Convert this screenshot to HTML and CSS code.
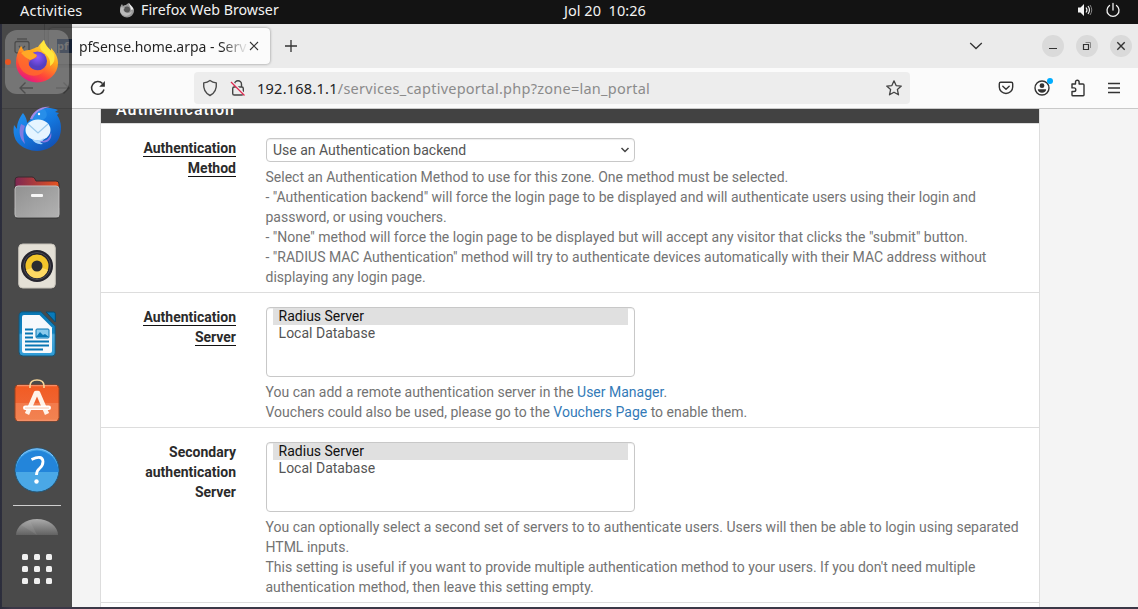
FILE: index.html
```
<!DOCTYPE html>
<html lang="en">
<head>
<meta charset="utf-8">
<title>pfSense.home.arpa - Services</title>
<link rel="stylesheet" href="styles.css">
</head>
<body>
<div class="desktop">
  <header class="topbar">
    <span class="activities">Activities</span>
    <svg class="app-icon" width="16" height="16" viewBox="0 0 16 16"><path d="M1 7C1 5 2 3 3 2l1 2c1-1 2-1 3-1C8 2 9 1 10 1c0 2 5 3 5 8a7 6.500 0 0 1-14 0z" fill="#999"/><path d="M10 1c0 3 2 4 2 7 2-1 3 0 3 1-1-4-3-5-5-8z" fill="#eee"/><circle cx="8" cy="7.500" r="3" fill="#555"/><path d="M2 5l4 1-2 1c1 5 7 5 9 2-1 6-10 7-12 0z" fill="#bbb"/></svg>
    <span class="app-name">Firefox Web Browser</span>
    <span class="clock">Jol 20&nbsp; 10:26</span>
    <span class="status">
      <svg width="16" height="16" viewBox="0 0 16 16" fill="none" stroke="#f2f2f2"><path d="M1 5.500h2.500L7 2v12l-3.500-3.500H1z" fill="#f2f2f2" stroke="none"/><path d="M9 5.500q2 2.500 0 5M11 4q3 4 0 8" stroke-width="1.200"/><path d="M13 3q3.500 5 0 10" stroke="#888"/></svg>
      <svg width="16" height="16" viewBox="0 0 16 16" fill="none" stroke="#f2f2f2" stroke-width="1.300" stroke-linecap="round"><path d="M4.500 3.500a6 6 0 1 0 7 0M8 1.500V8"/></svg>
    </span>
  </header>

  <main class="window">
    <div class="tabbar">
      <svg class="tab-view" width="16" height="16" viewBox="0 0 16 16" fill="none" stroke="#222" stroke-width="1.300"><path d="M3 1h10"/><rect x="1" y="3.500" width="14" height="11.500" rx="2"/><path d="M5 8l3 3 3-3"/></svg>
      <span class="tab-divider"></span>
      <div class="tab">
        <span class="favicon">pf</span>
        <span class="tab-title">pfSense.home.arpa - Serv</span>
        <svg width="10" height="10" viewBox="0 0 10 10" fill="none" stroke="#333" stroke-width="1.100"><path d="M1 1l8 8M9 1l-8 8"/></svg>
      </div>
      <svg class="new-tab" width="14" height="14" viewBox="0 0 14 14" fill="none" stroke="#333" stroke-width="1.300"><path d="M7 1v12M1 7h12"/></svg>
      <svg class="tab-list" width="14" height="10" viewBox="0 0 14 10" fill="none" stroke="#333" stroke-width="1.300"><path d="M1.200 2L7 7.500 12.800 2"/></svg>
      <div class="controls">
        <span class="control"><svg width="10" height="10" viewBox="0 0 10 10" fill="none" stroke="#333"><path d="M1 7.500h8"/></svg></span>
        <span class="control"><svg width="10" height="10" viewBox="0 0 10 10" fill="none" stroke="#333"><path d="M1.500 3.500h5v5h-5z" stroke-width="1.200"/><path d="M3.500 1.500h5v5.500" stroke="#888"/></svg></span>
        <span class="control"><svg width="10" height="10" viewBox="0 0 10 10" fill="none" stroke="#333" stroke-width="1.400"><path d="M1.300 1.300l7.400 7.400M8.700 1.300L1.300 8.700"/></svg></span>
      </div>
    </div>

    <div class="toolbar">
      <svg class="back" width="16" height="16" viewBox="0 0 16 16" fill="none" stroke="#333" stroke-width="1.400"><path d="M15 8H2M7.500 2.500L2 8l5.500 5.500"/></svg>
      <svg class="forward" width="16" height="16" viewBox="0 0 16 16" fill="none" stroke="#aaa" stroke-width="1.400"><path d="M1 8h13M8.500 2.500L14 8l-5.500 5.500"/></svg>
      <svg class="reload" width="16" height="16" viewBox="0 0 16 16" fill="none" stroke="#333" stroke-width="1.500"><path d="M14 9.500A6.300 6.300 0 1 1 12.500 3.600"/><path d="M14.900 1v5.700H9.200z" fill="#333" stroke="none"/></svg>
      <div class="urlbar">
        <svg width="16" height="18" viewBox="0 0 16 18" fill="none" stroke="#4a4a4a" stroke-width="1.400"><path d="M8 1.500C10 3 12 3.600 14.300 3.900c.5 5.500-1.500 10.300-6.300 12.600C3.200 14.200 1.200 9.400 1.700 3.900 4 3.600 6 3 8 1.500z" stroke-linejoin="round"/></svg>
        <svg class="lock" width="16" height="18" viewBox="0 0 16 18" fill="none"><path d="M4.500 8V5.200a3.500 3.500 0 0 1 7 0V8" stroke="#444" stroke-width="1.400"/><rect x="2.700" y="8" width="10.600" height="8" rx="1.600" stroke="#444" stroke-width="1.400"/><path d="M1.500 2.500l14 14" stroke="#eee" stroke-width="2.400"/><path d="M1 3l13.500 13.500" stroke="#e22850" stroke-width="1.300"/></svg>
        <span class="url"><span class="host">192.168.1.1</span><span class="path">/services_captiveportal.php?zone=lan_portal</span></span>
        <svg class="star" width="18" height="18" viewBox="0 0 18 18" fill="none" stroke="#444" stroke-width="1.300" stroke-linejoin="round"><path d="M9 1.800l2.100 4.800 5.200.5-3.900 3.500 1.100 5.200L9 13.200l-4.500 2.600 1.100-5.200-3.900-3.500 5.200-.5z"/></svg>
      </div>
      <div class="tools">
        <svg width="16" height="16" viewBox="0 0 16 16" fill="none" stroke="#333" stroke-width="1.400" stroke-linecap="round" stroke-linejoin="round"><path d="M2.700 2.300h10.600q1.400 0 1.400 1.400V7a6.700 6.500 0 0 1-13.400 0V3.700q0-1.400 1.400-1.400zM4.800 6.300L8 9.300l3.200-3"/></svg>
        <span class="account"><svg width="16" height="16" viewBox="0 0 16 16"><circle cx="8" cy="8" r="7" fill="none" stroke="#333" stroke-width="1.400"/><circle cx="8" cy="5.700" r="2.400" fill="#333"/><path d="M3.800 9.300h8.400c0 2-2 3.500-4.200 3.500S3.800 11.300 3.800 9.300z" fill="#333"/></svg><i class="badge"></i></span>
        <svg width="16" height="18" viewBox="0 0 16 18" fill="none" stroke="#333" stroke-width="1.400" stroke-linejoin="round"><path d="M2 5h3.500V3a1.800 1.800 0 0 1 3.600 0v2H13q1 0 1 1v10q0 .7-.8.700H2.800q-.8 0-.8-.8V12.500h2a1.800 1.800 0 0 0 0-3.600H2z"/></svg>
        <svg width="16" height="16" viewBox="0 0 16 16" fill="none" stroke="#333" stroke-width="1.300"><path d="M2 3.500h12M2 8h12M2 12.500h12"/></svg>
      </div>
    </div>

    <div class="page">
      <section class="panel">
        <h2 class="panel-heading"><span>Authentication</span></h2>
        <div class="group">
          <div class="label"><span class="required">Authentication<br>Method</span></div>
          <div class="field">
            <div class="select">Use an Authentication backend<svg width="10" height="8" viewBox="0 0 10 8" fill="none" stroke="#444" stroke-width="1.500"><path d="M1.500 2L5 5.500 8.500 2"/></svg></div>
            <p class="help">Select an Authentication Method to use for this zone. One method must be selected.<br>- "Authentication backend" will force the login page to be displayed and will authenticate users using their login and<br>password, or using vouchers.<br>- "None" method will force the login page to be displayed but will accept any visitor that clicks the "submit" button.<br>- "RADIUS MAC Authentication" method will try to authenticate devices automatically with their MAC address without<br>displaying any login page.</p>
          </div>
        </div>
        <div class="group">
          <div class="label"><span class="required">Authentication<br>Server</span></div>
          <div class="field">
            <div class="listbox"><div class="option selected">Radius Server</div><div class="option">Local Database</div></div>
            <p class="help">You can add a remote authentication server in the <a>User Manager</a>.<br>Vouchers could also be used, please go to the <a>Vouchers Page</a> to enable them.</p>
          </div>
        </div>
        <div class="group">
          <div class="label">Secondary<br>authentication<br>Server</div>
          <div class="field">
            <div class="listbox"><div class="option selected">Radius Server</div><div class="option">Local Database</div></div>
            <p class="help">You can optionally select a second set of servers to to authenticate users. Users will then be able to login using separated<br>HTML inputs.<br>This setting is useful if you want to provide multiple authentication method to your users. If you don't need multiple<br>authentication method, then leave this setting empty.</p>
          </div>
        </div>
      </section>
    </div>
  </main>

  <nav class="dock">
    <div class="launcher active">
      <i class="running"></i>
      <svg width="48" height="48" viewBox="0 0 48 48">
        <defs>
          <linearGradient id="fox" x1=".8" y1="0" x2=".3" y2="1"><stop offset="0" stop-color="#fff04a"/><stop offset=".4" stop-color="#ffa41c"/><stop offset=".75" stop-color="#ff453a"/><stop offset="1" stop-color="#e31587"/></linearGradient>
          <radialGradient id="globe" cy=".3"><stop offset="0" stop-color="#9059ff"/><stop offset="1" stop-color="#553fc0"/></radialGradient>
        </defs>
        <path d="M8 10c1 1 2 4 3 5 2-1 4-1 6-1 3-1 6-3 8-3 1-2 4-5 6-7 1 5 4 7 7 11v-3c5 5 7 10 7 15A21 19.500 0 0 1 3 27C3 20 5 15 8 10z" fill="url(#fox)"/>
        <path d="M31 4c-4 4-5 8-2 11 6 5 9 8 8 15 5-3 5-8 4-12-3-4-9-7-10-14z" fill="#ffe63c"/>
        <circle cx="24.500" cy="25" r="9.500" fill="url(#globe)"/>
        <path d="M5 17c4-2 9-1 13 1l6 2c0 3-6 3-7 5-3 4 0 8 6 9 5 1 8-1 10-3-3 8-10 10-17 8-9-3-12-12-11-22z" fill="#ff6b2c" opacity=".8"/>
        <path d="M8 17q3-3 9-2 3 2 7 4-1 3-7 5-6-3-9-7z" fill="#ffa926"/>
      </svg>
    </div>
    <div class="launcher">
      <svg width="50" height="50" viewBox="0 0 50 50">
        <defs><linearGradient id="bird" x1="0" y1="0" x2=".7" y2="1"><stop offset="0" stop-color="#2798f3"/><stop offset=".55" stop-color="#1478df"/><stop offset="1" stop-color="#1151b5"/></linearGradient></defs>
        <path d="M18 15C22 5 32 0 46 5l-3 2 4 1-2 2c5 7 5 16 2 23-5 11-20 16-32 11C4 40 0 31 2 20l3 4c0-7 3-12 6-16 3 4 4 7 4 10z" fill="url(#bird)"/>
        <path d="M18 14C22 5 30 1 38 2c-7 1-9 3-10 7-2 5-6 6-10 5z" fill="#a28ae8"/><path d="M20 15c3-7 7-10 12-11 5 5 3 10-4 12z" fill="#278ee9"/>
        <path d="M9 19c-3 8-1 15 4 20-1-5-3-11 0-18z" fill="#7f7be1"/>
        <ellipse cx="26" cy="25" rx="12.500" ry="10.500" fill="#e6f5ff"/><path d="M16 19l10 9 10-9" fill="none" stroke="#9bcaec" stroke-width="1.300"/>
        <path d="M20 34q7 3 12-1-1 4-4 4l3 2q-8 1-11-5z" fill="#a9d5fc"/><path d="M39 27c-1 7-6 10-12 9 7 4 14-1 12-9z" fill="#8678df"/><circle cx="27" cy="9" r="1.200" fill="#fff"/>
      </svg>
    </div>
    <div class="launcher">
      <svg width="46" height="44" viewBox="0 0 46 44">
        <defs><linearGradient id="tab" x1="0" x2="1"><stop offset="0" stop-color="#7d2853"/><stop offset="1" stop-color="#e65320"/></linearGradient><linearGradient id="folder" x1="0" y1="0" x2="1" y2="1"><stop offset="0" stop-color="#919191"/><stop offset="1" stop-color="#b2b2b2"/></linearGradient></defs>
        <path d="M1 32V4q0-3 3-3h14q2 0 3 2l1 2h20q3 0 3 3v24z" fill="url(#tab)" stroke="#392a2e"/>
        <rect x="1" y="10" width="44" height="31.500" rx="3" fill="url(#folder)" stroke="#c0c0c0"/><path d="M2 42h42" stroke="#333"/><rect x="17" y="18" width="12" height="3" rx="1" fill="#f7f7f7"/>
      </svg>
    </div>
    <div class="launcher">
      <svg width="38" height="46" viewBox="0 0 38 46">
        <rect x=".7" y="1" width="36.600" height="44" rx="4" fill="#e4e0d6" stroke="#c5c1b8"/><circle cx="19" cy="23" r="16" fill="#25242d"/><circle cx="19" cy="23" r="13.500" fill="none" stroke="#4b4a54"/><circle cx="19" cy="23" r="11.500" fill="#f3c52b"/><path d="M8 27a11.500 11.500 0 0 0 22 0L19 23z" fill="#ffd963"/><circle cx="19" cy="23" r="5.500" fill="#2b2c30"/>
      </svg>
    </div>
    <div class="launcher">
      <svg width="38" height="46" viewBox="0 0 38 46">
        <defs><linearGradient id="doc" x1="0" y1="0" x2="0" y2="1"><stop offset="0" stop-color="#0876b3"/><stop offset=".48" stop-color="#1686c3"/><stop offset=".52" stop-color="#4ba8da"/><stop offset="1" stop-color="#2d9bd7"/></linearGradient></defs>
        <path d="M5 .8h18L37.200 15v27q0 3-3 3H5q-4 0-4-4V5Q1 .8 5 .8z" fill="url(#doc)" stroke="#165474"/><path d="M28 1h7.500q1.800 0 1.800 1.800V11z" fill="#087abb" stroke="#064c72"/><path d="M6 4h15.500L34 16.500V40q0 2-2 2H6q-2 0-2-2V6q0-2 2-2z" fill="#f7f9fc"/>
        <path d="M7 18.500h8M7 22.500h8M7 26.500h8M7 30.500h24M7 34.500h24M7 38.500h18" stroke="#0876b3" stroke-width="2"/><rect x="18" y="18" width="13" height="9" rx="1" fill="#8acbed" stroke="#0876b3"/><path d="M18 26l4-5 3 3 2-1 4 3z" fill="#0876b3"/>
      </svg>
    </div>
    <div class="launcher store">
      <svg width="46" height="46" viewBox="0 0 46 46">
        <defs><linearGradient id="bag" x1="0" y1="0" x2="0" y2="1"><stop offset="0" stop-color="#f25b22"/><stop offset=".49" stop-color="#f06431"/><stop offset=".5" stop-color="#f37b4c"/><stop offset="1" stop-color="#f18250"/></linearGradient></defs>
        <rect x="1" y="8" width="44" height="36" rx="3.500" fill="url(#bag)" stroke="#9c421e"/><path d="M3 8.700h40M3 43.300h40" stroke="#ff9d75"/><path d="M16 11V9q0-6 7-6t7 6v2" fill="none" stroke="#f7d69a" stroke-width="1.600"/>
        <path d="M13 37L22 16h2l9 21" fill="none" stroke="#fff3e9" stroke-width="4.500" stroke-linejoin="round"/><rect x="9" y="28.500" width="28" height="4.500" rx="2.200" fill="#fff"/><path d="M11 31h24" stroke="#f9c8ad"/>
      </svg>
    </div>
    <div class="launcher">
      <svg width="46" height="46" viewBox="0 0 46 46"><circle cx="23" cy="23" r="22" fill="#4aa8e6" stroke="#235779"/><path d="M1.500 25a21.500 21.500 0 0 1 43 0z" fill="#2385da"/><path d="M7 9a21.500 21.500 0 0 1 32 0" fill="none" stroke="#7fc2ff"/><path d="M17.500 12.500q11-5 11.500 2 0 4-3.500 7-3 2.500-3 6.500" fill="none" stroke="#fff" stroke-width="2.800"/><circle cx="22.500" cy="34.500" r="2.200" fill="#fff"/></svg>
    </div>
    <span class="dock-rule"></span>
    <svg class="disc" width="46" height="18" viewBox="0 0 46 18"><defs><linearGradient id="disc" x1="0" y1="0" x2="0" y2="1"><stop offset="0" stop-color="#ababab"/><stop offset="1" stop-color="#626262"/></linearGradient></defs><path d="M2 17A21 16 0 0 1 44 17z" fill="url(#disc)"/><path d="M23 17L7 7l9-4z" fill="#bbb" opacity=".15"/></svg>
    <div class="apps"><i></i><i></i><i></i><i></i><i></i><i></i><i></i><i></i><i></i></div>
  </nav>
</div>
</body>
</html>
```
FILE: styles.css
```
* { box-sizing: border-box; }
body { margin: 0; font: 14px/20px Roboto, "Liberation Sans", sans-serif; }
svg { display: block; flex: none; }
.desktop { position: relative; width: 1138px; height: 609px; overflow: hidden; display: flex; flex-direction: column; padding: 0 0 2px 2px; background: linear-gradient(90deg, #2b2d3b, #3b3847 12px); }
.topbar { flex: none; height: 24px; margin-left: -2px; background: #131313; color: #f2f2f2; display: flex; align-items: center; padding: 0 17px 4px 20px; font: 14.5px/20px "Noto Sans", sans-serif; white-space: nowrap; }
.activities { width: 99px; letter-spacing: .2px; }
.app-icon { margin-right: 6px; }
.app-name { width: 423px; font-size: 14.2px; letter-spacing: .03px; }
.clock { flex: 1; font-size: 14.5px; letter-spacing: .03px; }
.status { display: flex; gap: 12px; }
.window { flex: 1; min-height: 0; display: flex; flex-direction: column; background: #f4f4f4; }
.tabbar { flex: none; height: 44px; background: #ebebeb; display: flex; align-items: center; padding: 0 6px 0 12px; }
.tab-divider { width: 1px; height: 44px; background: #bbb; margin: 0 4px 0 14px; }
.tab { width: 221px; height: 36px; display: flex; align-items: center; background: #fbfbfb; border-radius: 4px; box-shadow: 0 0 3px rgba(0,0,0,.4); padding: 0 11px 0 8px; font: 14px/20px "Noto Sans", sans-serif; color: #222; }
.favicon { width: 15px; height: 14px; margin-right: 7px; background: #234b92; color: #fff; font: bold 11px/13px "Open Sans", sans-serif; }
.tab-title { flex: 1; white-space: nowrap; overflow: hidden; padding-top: 2px; background: linear-gradient(90deg, #222 84%, #ddd 97%); background-clip: text; color: transparent; letter-spacing: -.04px; }
.new-tab { margin-left: 14px; }
.tab-list { margin-left: 671px; }
.controls { display: flex; gap: 12px; margin-left: auto; }
.control { width: 22px; height: 22px; border-radius: 50%; background: #dadada; display: grid; place-items: center; }
.toolbar { flex: none; height: 41px; border-bottom: 1px solid #c9c9c9; background: #fbfbfb; display: flex; align-items: center; padding: 0 16px; }
.forward { margin-left: 21px; }
.reload { margin-left: 19px; }
.urlbar { width: 716px; height: 32px; margin-left: 88px; border-radius: 4px; background: #ededed; display: flex; align-items: center; padding: 0 7px 0 8px; }
.lock { margin-left: 12px; }
.url { flex: 1; margin-left: 11px; font: 14.5px/20px "Noto Sans", sans-serif; letter-spacing: .25px; white-space: nowrap; }
.host { color: #222; }
.path { color: #8b8b8b; }
.tools { display: flex; align-items: center; gap: 20px; margin-left: auto; }
.account { position: relative; }
.badge { position: absolute; right: -3px; top: -2px; width: 6px; height: 6px; border-radius: 50%; background: #00adff; }
.page { flex: 1; min-height: 0; overflow: hidden; padding: 0 98px; }
.panel { width: 940px; height: 600px; background: #fff; border: solid #ddd; border-width: 0 1px; }
.panel-heading { height: 15px; margin: 0; overflow: hidden; background: #424242; color: #fff; border-bottom: 1px solid #ddd; font-size: 16px; font-weight: 500; line-height: 20px; letter-spacing: 1px; padding-left: 15px; }
.panel-heading span { display: block; margin-top: -9px; }
.group { display: flex; padding: 14px 0 5px; border-bottom: 1px solid #ddd; }
.label { width: 135px; margin-right: 30px; text-align: right; font-weight: 700; color: #2b2b2b; }
.required { border-bottom: 1px solid #111; }
.field { flex: 1; white-space: nowrap; }
.select { width: 369px; height: 24px; border: 1px solid #c8c8c8; border-radius: 4px; display: flex; align-items: center; justify-content: space-between; padding: 0 4px 0 6px; color: #555; box-shadow: inset 0 1px 1px rgba(0,0,0,.07); }
.listbox { width: 369px; height: 70px; border: 1px solid #c8c8c8; border-radius: 4px; padding: 0 6px; box-shadow: inset 0 1px 1px rgba(0,0,0,.07); }
.option { height: 17px; line-height: 17px; padding-left: 5.600px; color: #555; }
.selected { background: #e0e0e0; color: #111; }
.help { margin: 5px 0 0 -.5px; color: #737373; }
.help a { color: #337ab7; }
.dock { position: absolute; left: 2px; top: 24px; width: 70px; height: 583px; background: rgba(17,17,17,.75); display: flex; flex-direction: column; align-items: center; padding-top: 4px; }
.launcher { position: relative; width: 64px; height: 68px; flex: none; display: grid; place-items: center; }
.active { padding-bottom: 4px; }
.active::before { content: ""; position: absolute; inset: 2px 0; border-radius: 12px; background: rgba(255,255,255,.23); }
.active svg { position: relative; }
.store { padding-bottom: 5px; }
.running { position: absolute; left: 0; top: 31px; width: 6px; height: 6px; border-radius: 50%; background: #e95420; z-index: 1; }
.dock-rule { flex: none; width: 48px; height: 1px; background: #cfcfcf; margin-top: 1px; }
.disc { margin-top: 12px; }
.apps { display: grid; grid-template-columns: repeat(3, 6px); gap: 6px; margin-top: 18px; }
.apps i { width: 6px; height: 6px; border-radius: 1.5px; background: #f0f0f0; }
```
